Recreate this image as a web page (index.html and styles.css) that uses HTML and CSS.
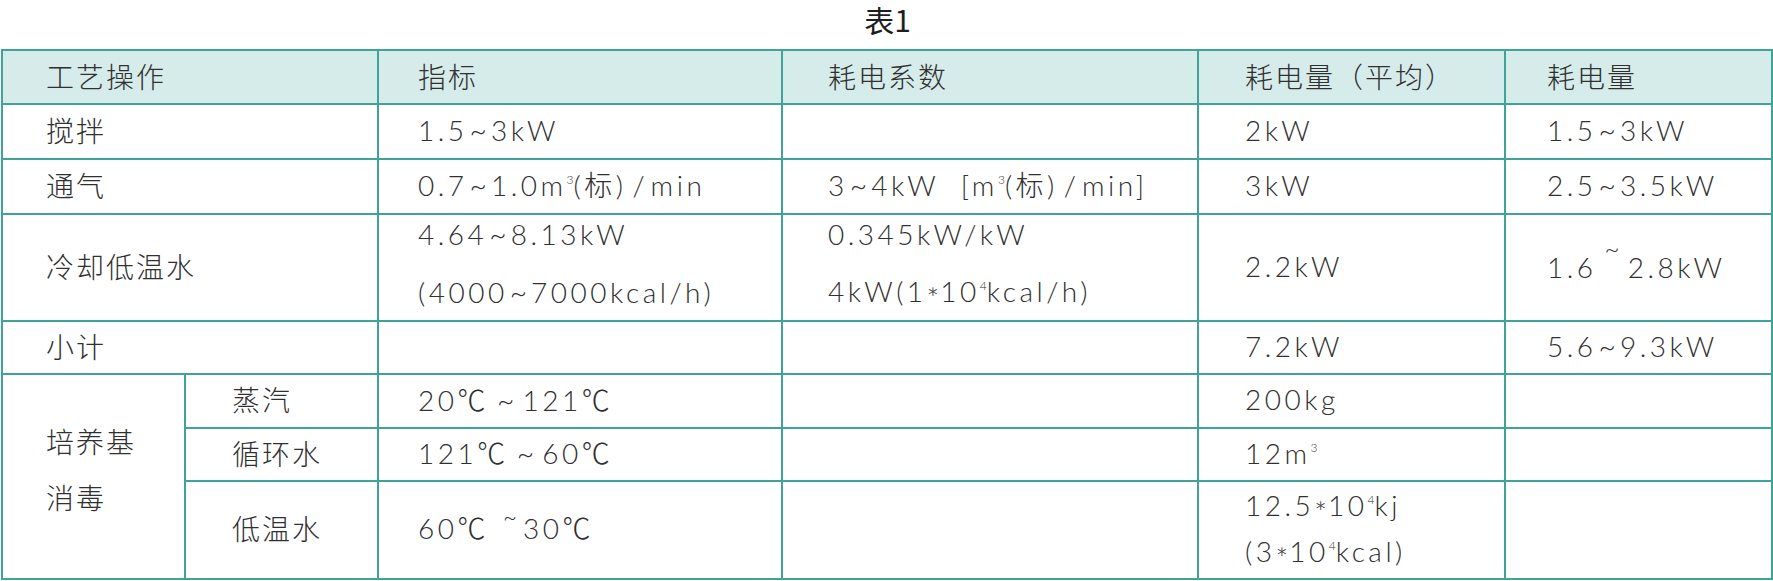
FILE: index.html
```html
<!DOCTYPE html>
<html lang="zh">
<head>
<meta charset="utf-8">
<title>表1</title>
<link rel="stylesheet" href="styles.css">
</head>
<body>
<div class="page">
  <h1 class="title">表1</h1>
  <table class="grid">
    <colgroup>
      <col class="c1"><col class="c1b"><col class="c2"><col class="c3"><col class="c4"><col class="c5">
    </colgroup>
    <tr class="head r-head">
      <td colspan="2" class="p1">工艺操作</td>
      <td class="p2">指标</td>
      <td class="p3">耗电系数</td>
      <td class="p4">耗电量（平均）</td>
      <td class="p5">耗电量</td>
    </tr>
    <tr class="r55">
      <td colspan="2" class="p1">搅拌</td>
      <td class="p2 num">1.5<span class="t">~</span>3kW</td>
      <td class="p3"></td>
      <td class="p4 num">2kW</td>
      <td class="p5 num">1.5<span class="t">~</span>3kW</td>
    </tr>
    <tr class="r55">
      <td colspan="2" class="p1">通气</td>
      <td class="p2 num">0.7<span class="t">~</span>1.0m<sup>3</sup>(标)<span class="sl">/</span>min</td>
      <td class="p3 num">3<span class="t">~</span>4kW&nbsp;&nbsp;[m<sup>3</sup>(标)<span class="sl">/</span>min]</td>
      <td class="p4 num">3kW</td>
      <td class="p5 num">2.5<span class="t">~</span>3.5kW</td>
    </tr>
    <tr class="r107">
      <td colspan="2" class="p1">冷却低温水</td>
      <td class="p2 num"><div class="stack gap23"><span>4.64<span class="t">~</span>8.13kW</span><span>(4000<span class="t">~</span>7000kcal/h)</span></div></td>
      <td class="p3 num"><div class="stack gap23"><span>0.345kW/kW</span><span>4kW(1<span class="ast">*</span>10<sup>4</sup>kcal/h)</span></div></td>
      <td class="p4 num">2.2kW</td>
      <td class="p5 num">1.6<span class="tilde-hi">~</span>2.8kW</td>
    </tr>
    <tr class="r53">
      <td colspan="2" class="p1">小计</td>
      <td class="p2"></td>
      <td class="p3"></td>
      <td class="p4 num">7.2kW</td>
      <td class="p5 num">5.6<span class="t">~</span>9.3kW</td>
    </tr>
    <tr class="r54">
      <td rowspan="3" class="p1"><div class="stack gap22"><span>培养基</span><span>消毒</span></div></td>
      <td class="ps">蒸汽</td>
      <td class="p2 num">20℃<span class="t wide">~</span>121℃</td>
      <td class="p3"></td>
      <td class="p4 num">200kg</td>
      <td class="p5"></td>
    </tr>
    <tr class="r53">
      <td class="ps">循环水</td>
      <td class="p2 num">121℃<span class="t wide">~</span>60℃</td>
      <td class="p3"></td>
      <td class="p4 num">12m<sup>3</sup></td>
      <td class="p5"></td>
    </tr>
    <tr class="r98">
      <td class="ps">低温水</td>
      <td class="p2 num">60℃<span class="tilde-top">~</span>30℃</td>
      <td class="p3"></td>
      <td class="p4 num"><div class="stack gap12"><span>12.5<span class="ast">*</span>10<sup>4</sup>kj</span><span>(3<span class="ast">*</span>10<sup>4</sup>kcal)</span></div></td>
      <td class="p5"></td>
    </tr>
  </table>
</div>
</body>
</html>
```

FILE: styles.css
```css
html, body {
  margin: 0;
  padding: 0;
  background: #ffffff;
}

.page {
  width: 1773px;
  height: 581px;
  overflow: hidden;
  font-family: "Noto Sans CJK SC Light", "Noto Sans CJK SC DemiLight", "Noto Sans CJK SC", "Noto Sans", sans-serif;
}

.title {
  margin: 0;
  padding-top: 2px;
  height: 47px;
  line-height: 34px;
  text-align: center;
  font-family: "Noto Sans CJK SC", sans-serif;
  font-size: 30px;
  font-weight: 400;
  color: #1e1e1e;
  padding-left: 2px;
}

.grid {
  margin-left: 1px;
  border-collapse: collapse;
  table-layout: fixed;
  width: 1770px;
  color: #303030;
  font-size: 28px;
  font-weight: 300;
  letter-spacing: 2px;
}

.c1 { width: 183px; }
.c1b { width: 193px; }
.c2 { width: 404px; }
.c3 { width: 416px; }
.c4 { width: 307px; }
.c5 { width: 267px; }

.grid td {
  border: 2px solid #3ea596;
  padding: 0 0 4px 0;
  vertical-align: middle;
  white-space: nowrap;
  line-height: 34px;
}

.head td {
  background: #d6ecea;
  padding-bottom: 2px;
}

.r-head { height: 54px; }
.r55 { height: 55px; }
.r107 { height: 107px; }
.r53 { height: 53px; }
.r54 { height: 54px; }
.r98 { height: 98px; }

.p1 { padding-left: 43px !important; }
.ps { padding-left: 46px !important; }
.p2 { padding-left: 39px !important; }
.p3 { padding-left: 45px !important; }
.p4 { padding-left: 46px !important; }
.p5 { padding-left: 41px !important; }

.num {
  font-family: "Lato", "Noto Sans CJK SC", sans-serif;
  font-weight: 300;
  letter-spacing: 3.5px;
}

.stack {
  display: flex;
  flex-direction: column;
}

.gap23 { gap: 23px; padding-bottom: 6px; }
.gap22 { gap: 22px; padding-bottom: 12px; }
.gap12 { gap: 12px; }

.t {
  display: inline-block;
  font-size: 30px;
  margin: 0 4px 0 2px;
  letter-spacing: 0;
}

.t.wide {
  margin: 0 8px 0 8px;
}

.sl {
  display: inline-block;
  margin: 0 6px;
  letter-spacing: 0;
}

.ast {
  display: inline-block;
  font-size: 30px;
  vertical-align: -7px;
  line-height: 0;
  letter-spacing: 1px;
}

sup {
  font-size: 12px;
  line-height: 0;
  vertical-align: 12px;
  letter-spacing: 0;
}

.tilde-hi {
  display: inline-block;
  font-size: 26px;
  vertical-align: 20px;
  line-height: 0;
  margin: 0 8px 0 8px;
  letter-spacing: 0;
}

.tilde-top {
  display: inline-block;
  font-size: 24px;
  vertical-align: 13px;
  line-height: 0;
  margin: 0 6px 0 14px;
  letter-spacing: 0;
}
```
